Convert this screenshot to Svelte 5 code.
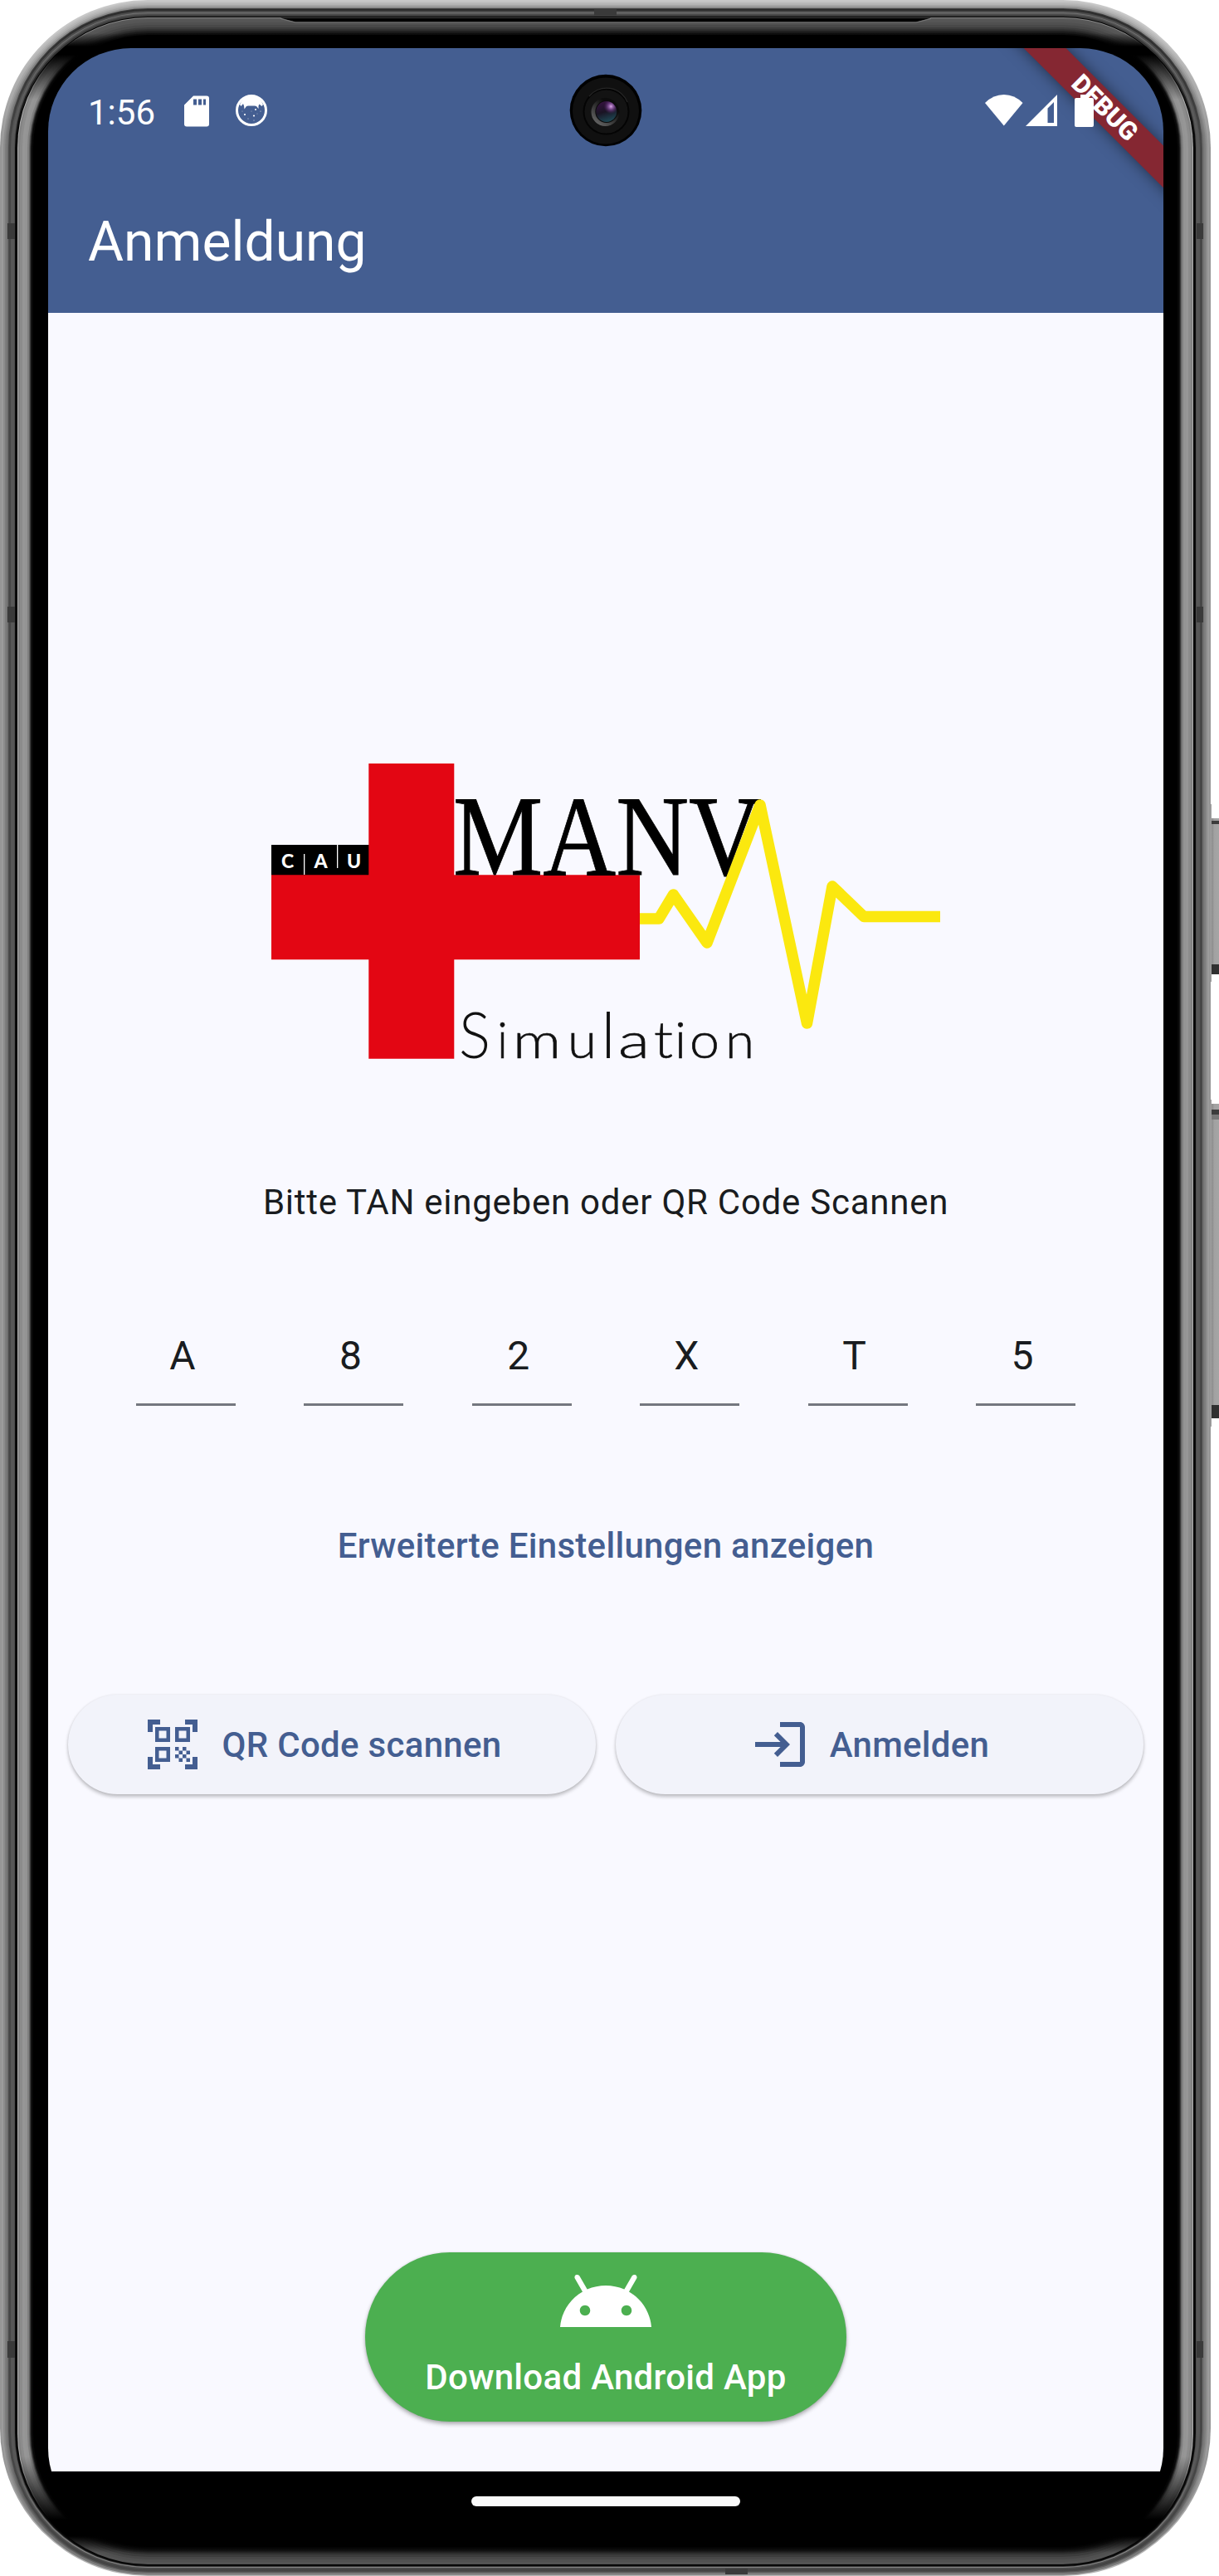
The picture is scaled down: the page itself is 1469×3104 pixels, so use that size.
<script>
  const tan = ['A', '8', '2', 'X', 'T', '5'];

  // Logo subtitle lettering: character, left edge, advance width, size
  const simulation = [
    ['S', 553, 38, 76],
    ['i', 599, 13, 61],
    ['m', 618, 58, 60],
    ['u', 684, 35, 60],
    ['l', 724, 18, 76],
    ['a', 745, 38, 60],
    ['t', 788, 23, 62],
    ['i', 813, 14, 61],
    ['o', 831, 36, 60],
    ['n', 874, 35, 60]
  ];

  const W = 1459;
  const H = 3104;

  // Metal bezel profile: inset, grey level at the top, on the sides and at the bottom
  const metal = [
    [0, 200, 150, 180],
    [2, 190, 156, 125],
    [4, 180, 140, 120],
    [6, 165, 125, 90],
    [8, 140, 112, 70],
    [10, 60, 74, 66],
    [11, 45, 70, 68],
    [13, 75, 86, 80],
    [15, 115, 88, 140],
    [16, 85, 86, 110],
    [17, 78, 78, 30],
    [18, 60, 10, 10],
    [20, 0, 0, 0]
  ];
  // Curved glass edge: the sheen fades out around the corners
  const glass = [
    [21, 135, 175, 80],
    [22, 88, 130, 84],
    [24, 86, 140, 80],
    [27, 80, 150, 72],
    [30, 72, 148, 60],
    [33, 60, 128, 46],
    [35, 50, 100, 34],
    [36, 44, 60, 28],
    [37, 38, 26, 22],
    [38, 26, 8, 14],
    [40, 14, 0, 6],
    [42, 0, 0, 0]
  ];
  const grey = (v) => `rgb(${v},${v},${v})`;
  const bottomInset = (d) => (d <= 21 ? (d * 14) / 21 : d - 7);
  const layers = [
    ...metal.map((l) => ({ l, glass: false })),
    ...glass.map((l) => ({ l, glass: true }))
  ].map(({ l: [d, top, side, bottom], glass }, i) => ({
    id: `layer${i}`,
    d,
    glass,
    h: H - d - bottomInset(d),
    top: grey(top),
    side: grey(side),
    bottom: grey(bottom)
  }));
</script>

<div class="device">
  <svg class="frame" viewBox="0 0 1469 3104" width="1469" height="3104" aria-hidden="true">
    <defs>
      {#each layers as l}
        <linearGradient id={l.id} gradientUnits="userSpaceOnUse" x1="0" y1="0" x2="0" y2={H}>
          <stop offset={40 / H} stop-color={l.top} />
          {#if l.glass}
            <stop offset={56 / H} stop-color="#000" />
            <stop offset={66 / H} stop-color="#000" />
            <stop offset={120 / H} stop-color={l.side} />
            <stop offset={2960 / H} stop-color={l.side} />
            <stop offset={3036 / H} stop-color="#000" />
            <stop offset={3056 / H} stop-color="#000" />
            <stop offset={3076 / H} stop-color={l.bottom} />
          {:else}
            <stop offset={170 / H} stop-color={l.side} />
            <stop offset={2960 / H} stop-color={l.side} />
            <stop offset={3070 / H} stop-color={l.bottom} />
          {/if}
        </linearGradient>
      {/each}
      <linearGradient id="key" x1="0" y1="0" x2="1" y2="0">
        <stop offset="0" stop-color="#8a8a8a" />
        <stop offset="0.3" stop-color="#a2a2a2" />
        <stop offset="1" stop-color="#a6a6a6" />
      </linearGradient>
    </defs>
    <g>
      <path d="M1458 969h2v214h-2zM1458 1325h2v394h-2z" fill="#a0a0a0" />
      <rect x="1460" y="986" width="12" height="188" fill="url(#key)" />
      <rect x="1460" y="989" width="12" height="4" fill="#3c3c3c" />
      <rect x="1460" y="1162" width="12" height="12" fill="#303030" />
      <rect x="1460" y="1330" width="12" height="379" fill="url(#key)" />
      <rect x="1460" y="1337" width="12" height="6" fill="#3c3c3c" />
      <rect x="1460" y="1343" width="12" height="6" fill="#777" />
      <rect x="1460" y="1693" width="12" height="16" fill="#303030" />
    </g>
    {#each layers as l}
      <rect x={l.d} y={l.d} width={W - 2 * l.d} height={l.h} rx={178 - l.d} fill="url(#{l.id})" />
    {/each}
    <path d="M338 21.500h784l-18 5H356z" fill="#000" />
    <path d="M338 22.500l18 4.500h748l18-4.500" fill="none" stroke="#777" />
    <g fill="#3a3a3a">
      <rect x="9" y="269" width="9" height="19" />
      <rect x="9" y="731" width="9" height="19" />
      <rect x="9" y="2821" width="9" height="20" />
      <rect x="1442" y="269" width="8" height="19" />
      <rect x="1442" y="731" width="8" height="19" />
      <rect x="1442" y="2821" width="8" height="20" />
      <rect x="716" y="10" width="27" height="10" />
      <rect x="874" y="3095" width="27" height="7" />
    </g>
  </svg>

  <div class="screen">
    <header class="status">
      <span class="clock">1:56</span>
      <svg class="sd" viewBox="0 0 30 38" width="30" height="38">
        <path fill="#fff" fill-rule="evenodd" d="M11 .5H27a3 3 0 0 1 3 3V34.500a3 3 0 0 1-3 3H3a3 3 0 0 1-3-3V11.500zM11 4.500v7h4v-7zM17 4.500v7h4v-7zM23 4.500v7h3v-7z" />
      </svg>
      <svg class="cat" viewBox="0 0 38 38" width="38" height="38">
        <circle cx="19" cy="19" r="17.500" fill="none" stroke="#fff" stroke-width="3" />
        <path fill="#fff" d="M5 12Q9 2 19 2T33 12L31.500 14 28.500 11.500 27.500 13.500V17L25 14 23 13.500H15L13 14 10.500 17.500 10 13.500 9 11 6.500 14z" />
        <g fill="#fff">
          <circle cx="24" cy="18" r="1" /><circle cx="11" cy="24" r="1.100" /><circle cx="22" cy="25.500" r="1.100" />
          <circle cx="19" cy="20" r=".4" /><circle cx="30" cy="20" r=".5" /><circle cx="15" cy="29" r=".5" />
          <circle cx="22" cy="31" r=".5" /><circle cx="26" cy="23" r=".4" /><circle cx="8" cy="20" r=".4" />
        </g>
      </svg>
      <svg class="wifi" viewBox="0 0 46 38" width="46" height="38">
        <path fill="#fff" d="M0 10Q10 0 22.800 0T45.500 10L22.800 37.500z" />
      </svg>
      <svg class="signal" viewBox="0 0 38 38" width="38" height="38">
        <path fill="#fff" fill-rule="evenodd" d="M38 0V38H0zM26.500 16.500V34H34V9z" />
      </svg>
      <svg class="battery" viewBox="0 0 24 39" width="24" height="39">
        <path fill="#fff" d="M7 0h10v4h4a2 2 0 0 1 2 2v31a2 2 0 0 1-2 2H2a2 2 0 0 1-2-2V6a2 2 0 0 1 2-2h5z" />
      </svg>
    </header>

    <div class="appbar"><h1>Anmeldung</h1></div>

    <main>
      <svg class="logo" viewBox="327 920 806 356" width="806" height="356">
        <path fill="#000" d="M327 1018h118v37H327z" />
        <path fill="#fff" d="M366 1029h1.300v25H366zM406 1018h1.300v28H406z" />
        <g class="cau">
          <text x="346.500" y="1046">C</text>
          <text x="386.500" y="1046">A</text>
          <text x="426.500" y="1046">U</text>
        </g>
        <path fill="#e30613" d="M444.300 920H547.300V1054.300H771V1156.300H547.300V1275.700H444.300V1156.300H327V1054.300H444.300z" />
        <text class="manv" x="546" y="1053.500" textLength="372" lengthAdjust="spacingAndGlyphs">MANV</text>
        <path class="pulse" d="M771 1107H794L811.500 1078 852 1136 916 970 972.500 1233 1003 1068 1041 1104.500H1133" />
        <g class="sim">
          {#each simulation as [c, x, w, size]}
            <text {x} y="1275" font-size={size} textLength={w} lengthAdjust="spacingAndGlyphs" class:tall={size > 70}>{c}</text>
          {/each}
        </g>
      </svg>

      <p class="hint">Bitte TAN eingeben oder QR Code Scannen</p>

      <div class="tan">
        {#each tan as c}<span>{c}</span>{/each}
      </div>

      <a class="more" href="#more">Erweiterte Einstellungen anzeigen</a>

      <div class="actions">
        <button class="tonal">
          <svg viewBox="0 0 24 24" width="72" height="72" fill="currentColor">
            <path d="M9.500 6.500v3h-3v-3h3M11 5H5v6h6V5zm-1.500 9.500v3h-3v-3h3M11 13H5v6h6v-6zm6.500-6.500v3h-3v-3h3M19 5h-6v6h6V5zm-6 8h1.500v1.500H13V13zm1.500 1.500H16V16h-1.500v-1.500zM16 13h1.500v1.500H16V13zm-3 3h1.500v1.500H13V16zm1.500 1.500H16V19h-1.500v-1.500zM16 16h1.500v1.500H16V16zm1.500-1.500H19V16h-1.500v-1.500zm0 3H19V19h-1.500v-1.500zM22 7h-2V4h-3V2h5v5zm0 15v-5h-2v3h-3v2h5zM2 22h5v-2H4v-3H2v5zM2 2v5h2V4h3V2H2z" />
          </svg>
          <span>QR Code scannen</span>
        </button>
        <button class="tonal">
          <svg viewBox="0 0 24 24" width="72" height="72" fill="currentColor">
            <path d="M11 7 9.600 8.400l2.600 2.600H2v2h10.200l-2.600 2.600L11 17l5-5-5-5zm9 12h-8v2h8c1.100 0 2-.9 2-2V5c0-1.100-.9-2-2-2h-8v2h8v14z" />
          </svg>
          <span>Anmelden</span>
        </button>
      </div>

      <button class="download">
        <svg viewBox="0 0 24 24" width="120" height="120" fill="#fff">
          <path d="M17.600 9.480l1.840-3.180c.16-.31.04-.69-.26-.85-.29-.15-.65-.06-.83.22l-1.880 3.240c-2.860-1.210-6.080-1.210-8.940 0L5.650 5.670c-.19-.29-.58-.38-.87-.2-.28.18-.37.54-.22.83L6.400 9.480C3.300 11.250 1.280 14.440 1 18h22c-.28-3.560-2.300-6.750-5.400-8.520zM7 15.250c-.69 0-1.250-.56-1.250-1.250S6.310 12.750 7 12.750 8.250 13.310 8.250 14 7.690 15.250 7 15.250zm10 0c-.69 0-1.250-.56-1.250-1.250s.56-1.250 1.250-1.250 1.250.56 1.250 1.250-.56 1.250-1.250 1.250z" />
        </svg>
        <span>Download Android App</span>
      </button>
    </main>

    <nav><span></span></nav>

    <div class="banner">DEBUG</div>
    <svg class="camera" viewBox="-45 -45 90 90" width="90" height="90">
      <defs>
        <linearGradient id="lens" x1="0.3" y1="0" x2="0.6" y2="1">
          <stop offset="0" stop-color="#35123f" />
          <stop offset="0.5" stop-color="#1a1424" />
          <stop offset="1" stop-color="#1e4a56" />
        </linearGradient>
        <radialGradient id="glint" cx="0.72" cy="0.25" r="0.35">
          <stop offset="0" stop-color="#dba6ea" />
          <stop offset="0.4" stop-color="#8a55a0" stop-opacity="0.8" />
          <stop offset="1" stop-color="#54206a" stop-opacity="0" />
        </radialGradient>
        <linearGradient id="ring" x1="0.9" y1="0" x2="0.2" y2="0.9">
          <stop offset="0.3" stop-color="#0c0c0c" />
          <stop offset="1" stop-color="#626262" />
        </linearGradient>
      </defs>
      <circle r="43.300" fill="#000" />
      <circle r="40" fill="#101010" cy=".5" />
      <circle r="27" cx=".5" cy="1.500" fill="#131313" stroke="#040404" stroke-width="2" />
      <path d="M-20-17A27 27 0 0 1 26-10" fill="none" stroke="#262626" stroke-width="1.200" />
      <circle r="17" cx="-.5" cy="2" fill="url(#ring)" />
      <circle r="13.500" cx=".8" cy="1.500" fill="#0a0a0a" />
      <circle r="12.500" cx=".8" cy="1.500" fill="url(#lens)" />
      <circle r="12.500" cx=".8" cy="1.500" fill="url(#glint)" />
    </svg>
  </div>
</div>

<style>
  :global(body) {
    margin: 0;
    background: #fff;
  }
  .device {
    position: relative;
    box-sizing: border-box;
    width: 1469px;
    height: 3104px;
    padding: 58px 67px 54px 58px;
    overflow: hidden;
    font-family: Roboto, sans-serif;
  }
  .frame {
    position: absolute;
    inset: 0;
  }
  .screen {
    position: relative;
    display: flex;
    flex-direction: column;
    width: 1344px;
    height: 2992px;
    border-radius: 100px;
    overflow: hidden;
    background: #000;
    color: #191c20;
  }
  .status {
    display: flex;
    align-items: flex-start;
    box-sizing: border-box;
    height: 151px;
    padding: 56px 83px 0 48px;
    background: #445e91;
    color: #fff;
  }
  .clock {
    width: 116px;
    margin-top: -3px;
    font-size: 42px;
    line-height: 50px;
  }
  .sd {
    margin-top: 1px;
  }
  .cat {
    margin-left: 32px;
  }
  .wifi {
    margin-left: auto;
  }
  .signal {
    margin-left: 3px;
  }
  .battery {
    position: relative;
    z-index: 2;
    margin-left: 21px;
  }
  .appbar {
    display: flex;
    align-items: center;
    box-sizing: border-box;
    height: 168px;
    padding: 0 48px 2px;
    background: #445e91;
  }
  h1 {
    margin: 0;
    color: #fff;
    font-size: 66px;
    font-weight: 400;
    line-height: 84px;
  }
  main {
    display: flex;
    flex: 1;
    flex-direction: column;
    align-items: center;
    padding: 543px 24px 60px;
    background: #f9f9ff;
  }
  .logo {
    display: block;
    flex: none;
    overflow: visible;
  }
  .cau {
    fill: #fff;
    font: 900 23px Lato, sans-serif;
    text-anchor: middle;
  }
  .manv {
    fill: #000;
    stroke: #000;
    stroke-width: 0.8px;
    font: 400 137px 'Liberation Serif', serif;
    font-kerning: none;
  }
  .pulse {
    fill: none;
    stroke: #fbe80f;
    stroke-width: 13.5px;
    stroke-linejoin: round;
  }
  .sim {
    fill: #111;
    stroke: #111;
    stroke-width: 0.6px;
    font-family: Lato, sans-serif;
    font-weight: 300;
  }
  .tall {
    stroke: none;
  }
  .hint {
    margin: 143px 0 0;
    font-size: 42px;
    line-height: 60px;
    letter-spacing: 0.75px;
    white-space: nowrap;
  }
  .tan {
    display: flex;
    justify-content: space-between;
    width: 1132px;
    margin-top: 119px;
  }
  .tan span {
    box-sizing: border-box;
    width: 120px;
    padding: 0 8px 21px 0;
    border-bottom: 3px solid #74777f;
    font-size: 48px;
    line-height: 72px;
    text-align: center;
  }
  .more {
    margin-top: 139px;
    color: #445e91;
    font-size: 42px;
    font-weight: 500;
    line-height: 60px;
    letter-spacing: 0.3px;
    text-decoration: none;
    white-space: nowrap;
  }
  .actions {
    display: flex;
    gap: 24px;
    width: 100%;
    margin-top: 149px;
  }
  button {
    display: flex;
    align-items: center;
    justify-content: center;
    border: 0;
    font: 500 42px/60px Roboto, sans-serif;
    letter-spacing: 0.3px;
    white-space: nowrap;
  }
  .tonal {
    flex: 1;
    gap: 24px;
    height: 120px;
    padding: 0 72px 0 48px;
    border-radius: 60px;
    background: #f2f3fa;
    color: #445e91;
    box-shadow: 0 3px 4px rgba(0, 0, 0, 0.24), 0 0 3px rgba(0, 0, 0, 0.08);
  }
  .tonal span {
    padding-top: 2px;
  }
  .download {
    flex-direction: column;
    width: 580px;
    height: 204px;
    margin-top: auto;
    padding: 0 0 23px;
    border-radius: 102px;
    background: #4caf50;
    color: #fff;
    box-shadow: 0 3px 5px rgba(0, 0, 0, 0.3), 0 0 3px rgba(0, 0, 0, 0.1);
  }
  .download span {
    padding-top: 1px;
  }
  nav {
    display: flex;
    align-items: center;
    justify-content: center;
    height: 72px;
    background: #000;
  }
  nav span {
    width: 324px;
    height: 12px;
    border-radius: 6px;
    background: #fafafa;
  }
  .banner {
    position: absolute;
    top: 53.5px;
    left: 1122.5px;
    width: 300px;
    height: 36.4px;
    transform: rotate(45deg);
    background: #852732;
    color: #fff;
    font-size: 30.6px;
    font-weight: 900;
    line-height: 36.4px;
    text-align: center;
    box-shadow: 0 0 18px rgba(0, 0, 0, 0.5);
  }
  .camera {
    position: absolute;
    top: 30px;
    left: 627px;
  }
</style>
